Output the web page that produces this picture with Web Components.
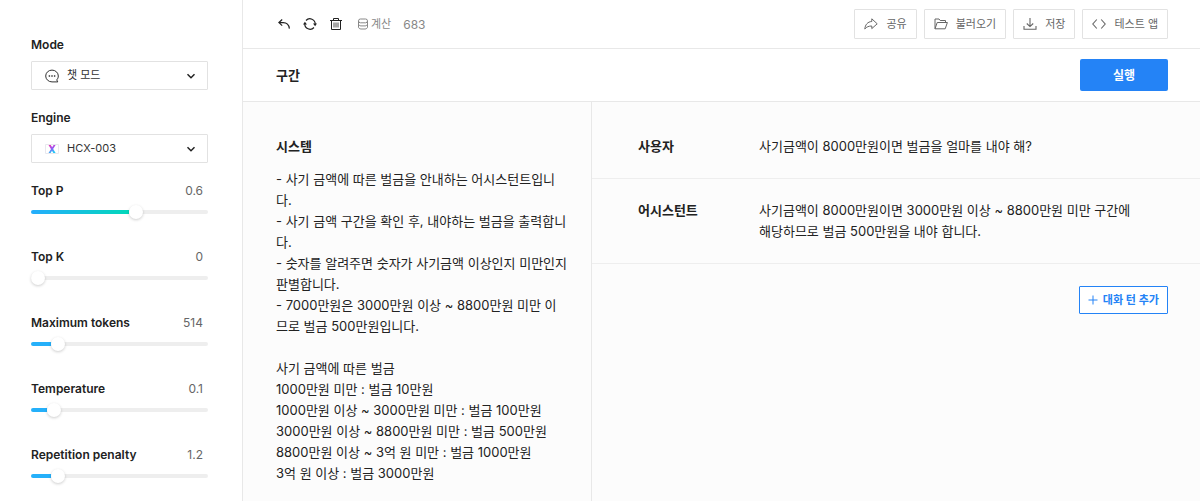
<!DOCTYPE html>
<html lang="ko">
<head>
<meta charset="utf-8">
<title>Playground</title>
<style>
body {
  margin: 0;
  font-family: Inter, "Noto Sans CJK KR", sans-serif;
  font-size: 13px;
  line-height: 21px;
  color: #222;
  background: #fff;
}
</style>
</head>
<body>
<play-ground>
  <side-panel slot="side">
    <select-field label="Mode" value="챗 모드">
      <svg slot="icon" width="14" height="14" viewBox="0 0 14 14" fill="none" stroke="#333">
        <path d="M12.8 12.900H7A6.300 5.900 0 1 1 13.300 7c0 1.600-.6 2.900-1.600 3.900z" stroke-linejoin="round"/>
        <path d="M3.700 7h1.400M6.300 7h1.400M8.900 7h1.400" stroke-width="1.400"/>
      </svg>
    </select-field>
    <select-field label="Engine" value="HCX-003">
      <svg slot="icon" width="14" height="14" viewBox="0 0 14 14" fill="none">
        <defs>
          <linearGradient id="x" x1="0" y1="0" x2="0.4" y2="1">
            <stop offset="0" stop-color="#f534a8"/>
            <stop offset="0.5" stop-color="#9a55f5"/>
            <stop offset="1" stop-color="#20c8f5"/>
          </linearGradient>
        </defs>
        <path d="M.5 2.500h13v9H.5z" stroke="#e8e8ee"/>
        <path d="M3.500 3h2.300l4.800 8H8.300zM8.600 3h2L5.600 11H3.500z" fill="url(#x)"/>
      </svg>
    </select-field>
    <range-field label="Top P" value="0.6" max="1" step="0.1"></range-field>
    <range-field label="Top K" value="0" max="128" step="1"></range-field>
    <range-field label="Maximum tokens" value="514" max="4096" step="1"></range-field>
    <range-field label="Temperature" value="0.1" max="1" step="0.1"></range-field>
    <range-field label="Repetition penalty" value="1.2" max="10" step="0.1"></range-field>
  </side-panel>

  <tool-bar slot="tools" count="683"></tool-bar>
  <title-bar slot="title" action="실행">구간</title-bar>

  <system-prompt slot="system" label="시스템">- 사기 금액에 따른 벌금을 안내하는 어시스턴트입니다.
- 사기 금액 구간을 확인 후, 내야하는 벌금을 출력합니다.
- 숫자를 알려주면 숫자가 사기금액 이상인지 미만인지 판별합니다.
- 7000만원은 3000만원 이상 ~ 8800만원 미만 이므로 벌금 500만원입니다.

사기 금액에 따른 벌금
1000만원 미만 : 벌금 10만원
1000만원 이상 ~ 3000만원 미만 : 벌금 100만원
3000만원 이상 ~ 8800만원 미만 : 벌금 500만원
8800만원 이상 ~ 3억 원 미만 : 벌금 1000만원
3억 원 이상 : 벌금 3000만원</system-prompt>

  <turn-list slot="turns">
    <chat-turn role-name="사용자" rows="1">사기금액이 8000만원이면 벌금을 얼마를 내야 해?</chat-turn>
    <chat-turn role-name="어시스턴트" rows="2">사기금액이 8000만원이면 3000만원 이상 ~ 8800만원 미만 구간에 해당하므로 벌금 500만원을 내야 합니다.</chat-turn>
  </turn-list>
</play-ground>

<script>
// Small helper: attach an open shadow root and fill it
function render(host, html) {
  const root = host.attachShadow({ mode: "open" });
  const template = document.createElement("template");
  template.innerHTML = html;
  root.append(template.content.cloneNode(true));
  return root;
}

// Page frame
class PlayGround extends HTMLElement {
  constructor() {
    super();
    render(this, `
<style>
:host {
  display: flex;
  height: 100vh;
  overflow: hidden;
}
main {
  flex: 1;
  min-width: 0;
  display: flex;
  flex-direction: column;
}
.work {
  flex: 1;
  min-height: 0;
  display: flex;
  background: #fcfcfc;
}
</style>
<slot name="side"></slot>
<main>
  <slot name="tools"></slot>
  <slot name="title"></slot>
  <div class="work">
    <slot name="system"></slot>
    <slot name="turns"></slot>
  </div>
</main>
`);
  }
}

class SidePanel extends HTMLElement {
  constructor() {
    super();
    render(this, `
<style>
:host {
  flex: 0 0 243px;
  box-sizing: border-box;
  padding: 34px 34px 0 31px;
  border-right: 1px solid #e8e8e8;
}
</style>
<slot></slot>
`);
  }
}

// Labelled drop-down with an icon in front
class SelectField extends HTMLElement {
  constructor() {
    super();
    const label = this.getAttribute("label");
    const value = this.getAttribute("value");
    render(this, `
<style>
:host {
  display: block;
  margin-bottom: 17px;
}
label {
  display: block;
  margin-bottom: 6px;
  font-size: 12px;
  font-weight: 600;
}
.box {
  display: flex;
  align-items: center;
  box-sizing: border-box;
  height: 29px;
  padding: 0 11px 0 13px;
  border: 1px solid #e2e2e2;
  border-radius: 1px;
}
select {
  flex: 1;
  appearance: none;
  margin: 0;
  padding: 0 0 0 8px;
  border: 0;
  background: none;
  color: #333;
  font: inherit;
  font-size: 11px;
}
</style>
<label for="field">${label}</label>
<div class="box">
  <slot name="icon"></slot>
  <select id="field"><option>${value}</option></select>
  <svg width="10" height="10" viewBox="0 0 10 10" fill="none" stroke="#222" stroke-width="1.500"><path d="M1.500 3.200 5 6.700l3.500-3.500"/></svg>
</div>
`);
  }
}

// Labelled slider, the filled part follows the value
class RangeField extends HTMLElement {
  constructor() {
    super();
    const label = this.getAttribute("label");
    const value = this.getAttribute("value");
    const max = this.getAttribute("max");
    const step = this.getAttribute("step");
    const root = render(this, `
<style>
:host {
  display: block;
  margin-bottom: 27px;
}
.head {
  display: flex;
  justify-content: space-between;
  padding-right: 5px;
  font-size: 12px;
}
label {
  font-weight: 600;
}
output {
  color: #666;
}
input {
  appearance: none;
  display: block;
  width: 100%;
  height: 14px;
  margin: 4px 0 0;
  background: none;
}
input::-webkit-slider-runnable-track {
  height: 4px;
  border-radius: 2px;
  background:
    linear-gradient(to right, transparent var(--fill), #eee var(--fill)),
    linear-gradient(to right, #25adfd, #00dbb5 60%);
}
input.low::-webkit-slider-runnable-track {
  background: linear-gradient(to right, #25b0fa var(--fill), #eee var(--fill));
}
input::-webkit-slider-thumb {
  appearance: none;
  width: 14px;
  height: 14px;
  margin-top: -5px;
  border-radius: 50%;
  background: #fff;
  box-shadow: 0 1px 3px rgba(0, 0, 0, 0.2);
}
</style>
<div class="head">
  <label for="range">${label}</label>
  <output for="range">${value}</output>
</div>
<input id="range" type="range" min="0" max="${max}" step="${step}" value="${value}">
`);
    const input = root.querySelector("input");
    const output = root.querySelector("output");
    const update = () => {
      const ratio = input.value / max;
      input.style.setProperty("--fill", `calc((100% - 14px) * ${ratio})`);
      input.classList.toggle("low", ratio < 0.3);
    };
    input.addEventListener("input", () => {
      output.textContent = input.value;
      update();
    });
    update();
  }
}

// Top row: history icons, token count, file actions
class ToolBar extends HTMLElement {
  constructor() {
    super();
    const count = this.getAttribute("count");
    render(this, `
<style>
:host {
  display: flex;
  align-items: center;
  justify-content: space-between;
  box-sizing: border-box;
  height: 49px;
  flex: none;
  padding: 0 32px 0 34px;
  border-bottom: 1px solid #e8e8e8;
}
.group {
  display: flex;
  align-items: center;
}
.history {
  gap: 12px;
}
.files {
  gap: 7px;
}
button {
  display: flex;
  align-items: center;
  margin: 0;
  padding: 0;
  border: 0;
  background: none;
  font: inherit;
}
.files button {
  gap: 8px;
  height: 30px;
  padding: 0 9px;
  border: 1px solid #e2e2e2;
  border-radius: 1px;
  color: #666;
  font-size: 11px;
}
.count {
  display: flex;
  align-items: center;
  gap: 2px;
  margin-left: 2px;
  color: #888;
  font-size: 11px;
}
.count b {
  margin-left: 10px;
  font-weight: 400;
  font-size: 12px;
}
svg {
  fill: none;
  stroke: #222;
}
.files svg {
  stroke: #666;
}
.count svg {
  stroke: #888;
}
</style>
<div class="group history">
  <button aria-label="실행 취소"><svg width="14" height="14" viewBox="0 0 14 14" stroke-width="1.200"><path d="M5.200 2.500 1.900 5.600l3.300 3M2.100 5.600h4c3.600 0 5.800 2 6.300 6"/></svg></button>
  <button aria-label="새로고침"><svg width="14" height="14" viewBox="0 0 14 14" stroke-width="1.200"><path d="M3 3.500a5.300 5.300 0 0 1 9.200 3.800M11 10.500A5.300 5.300 0 0 1 1.800 6.700"/><path d="M10 6.600h4l-1.900 2.600zM0 7.400h4L1.900 4.800z" fill="#222" stroke="none"/></svg></button>
  <button aria-label="삭제"><svg width="14" height="14" viewBox="0 0 14 14"><path d="M1 3.500h12M4.500 3.500v-2h5v2M2.500 3.500v9h9v-9"/><path d="M5 5.500v5M7 5.500v5M9 5.500v5" stroke-width=".8"/></svg></button>
  <span class="count">
    <svg width="12" height="12" viewBox="0 0 12 12"><rect x="1.500" y="1" width="9" height="3.800" rx="1.900"/><path d="M1.500 3v6c0 1.200 1.200 2 2.500 2h4c1.300 0 2.500-.8 2.500-2V3M1.500 6c.2 1.200 1.200 1.900 2.500 1.900h4c1.300 0 2.300-.7 2.500-1.900"/></svg>
    계산 <b>${count}</b>
  </span>
</div>
<div class="group files">
  <button><svg width="14" height="14" viewBox="0 0 14 14"><path d="M7.800 1.800 13.200 6.800l-5.400 4.800V9C4.800 9 2.600 9.800.8 12 1.200 7.800 3.600 4.700 7.800 4.500z" stroke-linejoin="round"/></svg>공유</button>
  <button><svg width="14" height="14" viewBox="0 0 14 14"><path d="M1 11.800V2h4l1.200 1.500h5.300v2M1 11.800 3.200 5.500h10.200l-2.200 6.300z" stroke-linejoin="round"/></svg>불러오기</button>
  <button><svg width="14" height="14" viewBox="0 0 14 14"><path d="M7 1v8.500M3.800 6.500 7 9.600l3.200-3.100M1 9v3.300h12V9" stroke-width="1.100"/></svg>저장</button>
  <button><svg width="14" height="14" viewBox="0 0 14 14"><path d="M4.800 2.500.8 7l4 4.500M9.200 2.500l4 4.500-4 4.500" stroke-width="1.100"/></svg>테스트 앱</button>
</div>
`);
  }
}

class TitleBar extends HTMLElement {
  constructor() {
    super();
    render(this, `
<style>
:host {
  display: flex;
  align-items: center;
  justify-content: space-between;
  box-sizing: border-box;
  height: 53px;
  flex: none;
  padding: 0 32px 0 33px;
  border-bottom: 1px solid #e8e8e8;
}
h1 {
  margin: 0;
  font-size: 13px;
  font-weight: 600;
}
button {
  width: 88px;
  height: 32px;
  border: 0;
  border-radius: 2px;
  background: #2483f6;
  color: #fff;
  font: inherit;
  font-size: 12px;
  font-weight: 600;
}
</style>
<h1><slot></slot></h1>
<button>${this.getAttribute("action")}</button>
`);
  }
}

const textareaStyle = `
textarea {
  display: block;
  box-sizing: border-box;
  width: 100%;
  margin: 0;
  padding: 0;
  border: 0;
  outline: 0;
  resize: none;
  overflow: hidden;
  background: none;
  color: inherit;
  font: inherit;
}
`;

class SystemPrompt extends HTMLElement {
  constructor() {
    super();
    render(this, `
<style>
:host {
  flex: 0 0 349px;
  box-sizing: border-box;
  padding: 34px 23px 0 33px;
  border-right: 1px solid #e8e8e8;
}
label {
  display: block;
  margin-bottom: 12px;
  font-weight: 600;
}
${textareaStyle}
</style>
<label for="text">${this.getAttribute("label")}</label>
<textarea id="text" rows="15">${this.textContent}</textarea>
`);
  }
}

class TurnList extends HTMLElement {
  constructor() {
    super();
    render(this, `
<style>
:host {
  flex: 1;
  min-width: 0;
  padding-top: 13px;
}
.foot {
  display: flex;
  justify-content: flex-end;
  padding: 22px 32px;
}
button {
  display: flex;
  align-items: center;
  gap: 5px;
  height: 28px;
  padding: 0 8px;
  border: 1px solid #2483f6;
  border-radius: 1px;
  background: #fff;
  color: #2483f6;
  font: inherit;
  font-size: 11px;
  font-weight: 600;
}
</style>
<slot></slot>
<div class="foot">
  <button><svg width="10" height="10" viewBox="0 0 10 10" stroke="#2483f6"><path d="M5 .5v9M.5 5h9"/></svg>대화 턴 추가</button>
</div>
`);
  }
}

// One message of the conversation
class ChatTurn extends HTMLElement {
  constructor() {
    super();
    render(this, `
<style>
:host {
  display: flex;
  padding: 21px 32px 21px 46px;
  border-bottom: 1px solid #eee;
}
label {
  flex: 0 0 121px;
  font-weight: 600;
}
${textareaStyle}
textarea {
  word-break: keep-all;
}
</style>
<label for="text">${this.getAttribute("role-name")}</label>
<textarea id="text" rows="${this.getAttribute("rows")}">${this.textContent}</textarea>
`);
  }
}

customElements.define("play-ground", PlayGround);
customElements.define("side-panel", SidePanel);
customElements.define("select-field", SelectField);
customElements.define("range-field", RangeField);
customElements.define("tool-bar", ToolBar);
customElements.define("title-bar", TitleBar);
customElements.define("system-prompt", SystemPrompt);
customElements.define("turn-list", TurnList);
customElements.define("chat-turn", ChatTurn);
</script>
</body>
</html>
